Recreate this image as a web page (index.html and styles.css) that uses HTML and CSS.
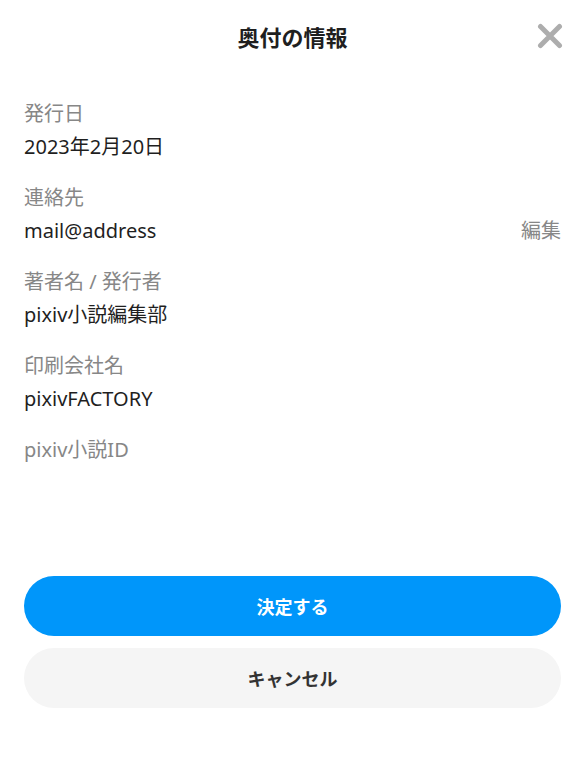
FILE: index.html
```html
<!DOCTYPE html>
<html>
	<head>
		<meta charset="utf-8">
		<title>奥付の情報</title>
		<link rel="stylesheet" href="styles.css">
	</head>
	<body>
		<div class="dialog">
			<!-- ヘッダー -->
			<div class="header">
				<h1 class="title">奥付の情報</h1>
				<button class="close" aria-label="閉じる">
					<svg width="26" height="26" viewBox="0 0 26 26">
						<path d="M3.5 3.5 L22.5 22.5 M22.5 3.5 L3.5 22.5" stroke="#adadad" stroke-width="5" stroke-linecap="round"/>
					</svg>
				</button>
			</div>
			<!-- 奥付の項目 -->
			<ul class="fields">
				<li>
					<div class="label">発行日</div>
					<div class="value">2023年2月20日</div>
				</li>
				<li>
					<div class="label">連絡先</div>
					<div class="value row">
						<span>mail@address</span>
						<a class="edit">編集</a>
					</div>
				</li>
				<li>
					<div class="label">著者名 / 発行者</div>
					<div class="value">pixiv小説編集部</div>
				</li>
				<li>
					<div class="label">印刷会社名</div>
					<div class="value">pixivFACTORY</div>
				</li>
				<li>
					<div class="label">pixiv小説ID</div>
				</li>
			</ul>
			<!-- ボタン -->
			<div class="footer">
				<button class="btn primary">決定する</button>
				<button class="btn secondary">キャンセル</button>
			</div>
		</div>
	</body>
</html>
```

FILE: styles.css
```css
* {
	box-sizing: border-box;
}

body {
	margin: 0;
	background: #fff;
	font-family: "Noto Sans", "Noto Sans CJK JP", sans-serif;
	color: #1f1f1f;
}

.dialog {
	height: 766px;
	display: flex;
	flex-direction: column;
	padding: 0 24px;
}

/* ヘッダー */
.header {
	position: relative;
	height: 76px;
	display: flex;
	align-items: center;
	justify-content: center;
}

.header .title {
	margin: 0;
	font-size: 22px;
	font-weight: bold;
	color: #1f1f1f;
	font-family: "Noto Sans CJK JP", sans-serif;
	position: relative;
	top: -2px;
}

.header .close {
	position: absolute;
	right: -2px;
	top: 23px;
	width: 26px;
	height: 26px;
	padding: 0;
	border: none;
	background: none;
}

.header .close svg {
	display: block;
}

/* 項目 */
.fields {
	list-style: none;
	margin: 0;
	padding: 21px 0 0;
}

.fields li {
	margin-bottom: 18px;
}

.fields .label {
	height: 33px;
	line-height: 33px;
	font-size: 20px;
	color: #878787;
}

.fields .value {
	height: 33px;
	line-height: 33px;
	font-size: 20px;
	color: #1f1f1f;
}

.fields .row {
	display: flex;
	justify-content: space-between;
}

.fields .edit {
	color: #878787;
	cursor: pointer;
}

/* ボタン */
.footer {
	margin-top: auto;
	padding-bottom: 58px;
	display: flex;
	flex-direction: column;
	gap: 12px;
}

.btn {
	height: 60px;
	border: none;
	border-radius: 30px;
	font-size: 18px;
	font-weight: bold;
	font-family: "Noto Sans CJK JP", sans-serif;
	cursor: pointer;
}

.btn.primary {
	background: #0096fa;
	color: #fff;
}

.btn.secondary {
	background: #f5f5f5;
	color: #333;
}
```
